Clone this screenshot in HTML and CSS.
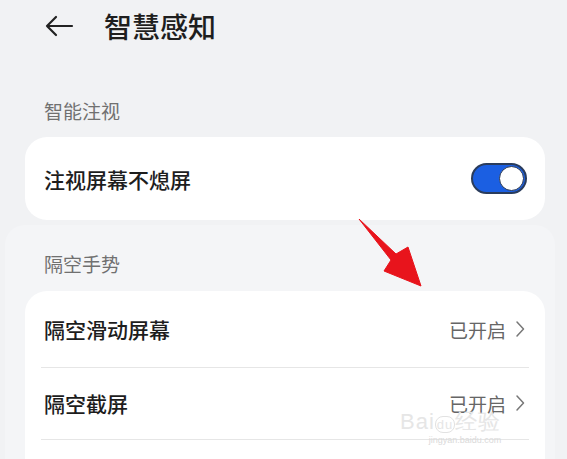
FILE: index.html
```html
<!DOCTYPE html>
<html lang="zh">
<head>
<meta charset="utf-8">
<link rel="stylesheet" href="styles.css">
</head>
<body>
<div class="page">
  <header class="topbar">
    <svg class="back" width="30" height="22" viewBox="0 0 30 22"><path d="M28 11H3M12 2L3 11l9 9" fill="none" stroke="#222" stroke-width="2.2" stroke-linecap="round" stroke-linejoin="round"/></svg>
    <h1 class="title">智慧感知</h1>
  </header>
  <div class="section-title first">智能注视</div>
  <div class="card">
    <div class="row">
      <span class="label">注视屏幕不熄屏</span>
      <span class="toggle"><span class="knob"></span></span>
    </div>
  </div>
  <div class="panel">
    <div class="section-title">隔空手势</div>
    <div class="card list">
      <div class="row">
        <span class="label">隔空滑动屏幕</span>
        <span class="value">已开启<svg class="chev" width="10" height="18" viewBox="0 0 10 18"><path d="M2 2l6.5 7L2 16" fill="none" stroke="#777" stroke-width="1.5" stroke-linecap="round" stroke-linejoin="round"/></svg></span>
      </div>
      <div class="row">
        <span class="label">隔空截屏</span>
        <span class="value">已开启<svg class="chev" width="10" height="18" viewBox="0 0 10 18"><path d="M2 2l6.5 7L2 16" fill="none" stroke="#777" stroke-width="1.5" stroke-linecap="round" stroke-linejoin="round"/></svg></span>
      </div>
      <div class="row">
        <span class="label">隔空按压</span>
        <span class="value">已开启</span>
      </div>
    </div>
  </div>
  <svg class="arrow" width="70" height="70" viewBox="0 0 70 70"><path d="M1 0 L38 35 L50 28 L63 67 L26 52 L33 41 Z" fill="#e8141c" stroke="#e8141c" stroke-width="1" stroke-linejoin="round"/></svg>
  <div class="watermark"><span class="wm-big">Bai<span class="wm-du">du</span>经验</span><span class="wm-small">jingyan.baidu.com</span></div>
</div>
</body>
</html>
```
FILE: styles.css
```css
* { box-sizing: border-box; margin: 0; padding: 0; }
html, body { width: 567px; height: 459px; overflow: hidden; }
body {
  background: #f1f2f4;
  font-family: "Noto Sans CJK SC", "Noto Sans", sans-serif;
  color: #1b1b1b;
}
.page { position: relative; height: 459px; overflow: hidden; }
.topbar {
  height: 52px;
  display: flex;
  align-items: center;
  padding-left: 44px;
  gap: 30px;
}
.back { display: block; }
.title { font-size: 28px; font-weight: 500; color: #1e1e1e; line-height: 1; }
.section-title {
  font-size: 19px;
  color: #707070;
  line-height: 22px;
  padding-left: 44px;
}
.section-title.first { margin-top: 48px; }
.card {
  background: #fff;
  border-radius: 22px;
  margin: 15px 22px 0 25px;
}
.card > .row {
  height: 83px;
  display: flex;
  align-items: center;
  justify-content: space-between;
  padding: 0 18px 0 19px;
}
.label { font-size: 21px; font-weight: 500; color: #1d1d1d; }
.toggle {
  width: 56px; height: 31px;
  border-radius: 16px;
  background: #1b5fe2;
  border: 2px solid #2a3c5c;
  position: relative;
  display: block;
}
.knob {
  position: absolute;
  right: 1px; top: 1px;
  width: 25px; height: 25px;
  border-radius: 50%;
  background: #fff;
  border: 1.5px solid #2b3a55;
}
.panel {
  margin: 5px 12px 0 5px;
  background: #f4f5f7;
  border-radius: 20px 20px 0 0;
  padding-top: 28px;
  height: 300px;
}
.panel .section-title { padding-left: 39px; }
.panel .card { margin: 16px 10px 0 20px; }
.list > .row {
  height: 72px;
  padding: 0 20px 0 19px;
  position: relative;
}
.list > .row:first-child { height: 76px; }
.list > .row + .row::before {
  content: "";
  position: absolute;
  left: 16px; right: 16px; top: 0;
  border-top: 1px solid #e6e6e6;
}
.value {
  display: flex; align-items: center; gap: 9px;
  font-size: 19px; color: #666;
}
.chev { display: block; }
.arrow { position: absolute; left: 358px; top: 219px; }
.watermark {
  position: absolute; left: 400px; top: 412px;
  display: flex; flex-direction: column; align-items: flex-end;
  pointer-events: none;
}
.wm-big { font-family: "Liberation Sans", sans-serif; font-size: 22px; line-height: 20px; color: #e6e6e6; letter-spacing: 1px; }
.wm-du { border: 1px solid #e2e2e2; border-radius: 8px; font-size: 13px; padding: 0 1px; }
.wm-small { font-size: 9px; color: #dadada; font-family: "Liberation Sans", sans-serif; }
```
